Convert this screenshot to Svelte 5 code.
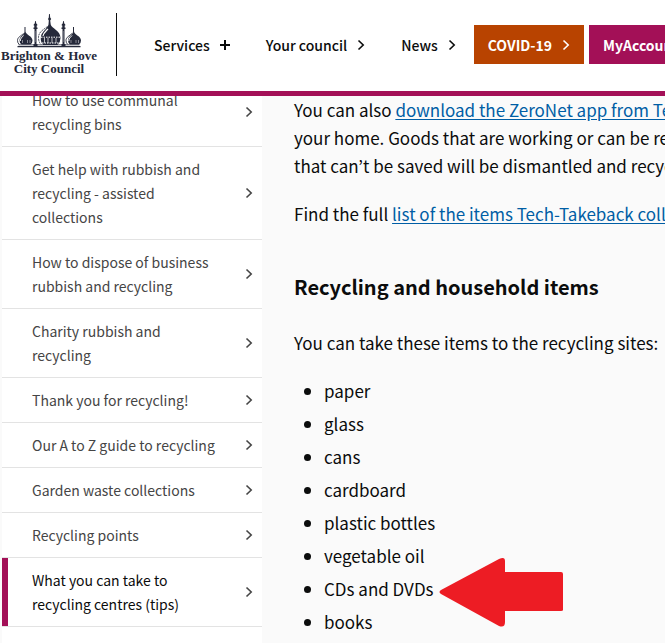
<script>
  const nav = [
    { label: 'Services', icon: 'plus' },
    { label: 'Your council', icon: 'chevron' },
    { label: 'News', icon: 'chevron' }
  ];
  const sections = [
    'How to use communal recycling bins',
    'Get help with rubbish and recycling - assisted collections',
    'How to dispose of business rubbish and recycling',
    'Charity rubbish and recycling',
    'Thank you for recycling!',
    'Our A to Z guide to recycling',
    'Garden waste collections',
    'Recycling points',
    'What you can take to recycling centres (tips)'
  ];
  const current = sections.length - 1;
  const items = ['paper', 'glass', 'cans', 'cardboard', 'plastic bottles', 'vegetable oil', 'CDs and DVDs', 'books'];
</script>

{#snippet chevron()}
  <svg class="chevron" viewBox="0 0 8 12" aria-hidden="true"><path d="M1.500 1.500 6.200 6 1.500 10.500" /></svg>
{/snippet}

{#snippet sideDome()}
  <path d="M7.500 0h1v4.500c.5 3.500 7 4.500 7 9q0 2.500-2 4H4.500q-2-1.500-2-4c0-4.500 5-5.500 5-9z" />
  <path d="M6.500 6.500C4 9 .5 10 .5 13.500q0 2.500 1.800 4" fill="none" stroke="#25293a" stroke-width=".9" />
  <path d="M6.500 8.500C5 10.500 3.300 11 3.300 14" fill="none" stroke="#fff" />
  <path d="M5.500 13v3M10.500 13v3M13 13v3" stroke="#c9cad0" stroke-width=".6" />
{/snippet}

{#snippet minaret()}
  <path d="M1.200 0h.6l.5 2.500 1 1v1H2.700v2h.8v1.500H2.500V23H3.500v2h-4v-2h1V8H-.5V6.500h.8v-2h-.6v-1l1-1z" />
  <path d="M1.500 10v11" stroke="#8b8e98" stroke-width=".5" />
{/snippet}

<div class="page">
  <header>
    <a class="logo" href="#home">
      <svg viewBox="0 -1 64 36" aria-hidden="true">
        <g fill="#25293a">
          <g transform="translate(0 13)">{@render sideDome()}</g>
          <g transform="translate(17 7)">{@render minaret()}</g>
          <path d="M32 0h.8l.4 3.500 1 1.500-1 1.500.5 4c1 4 9.800 6 9.800 13.500q0 4-3 7H26q-3.500-3-3.500-7c0-7 8.500-9 9-13.500l.3-4L31 5l.8-1.500z" />
          <path d="M30 13c-4 3-8 5-8.500 10q0 5 3 8h1.500q-3-4-2-8.500c.5-4 4-6 6-9.500z" fill="#fff" />
          <path d="M30.500 12.500C26 16 21.500 18 21.500 23.500q0 4.500 2.500 7" fill="none" stroke="#25293a" stroke-width=".8" stroke-dasharray="2 .7" />
          <path d="M31 15c-3 3-4.500 4-5 7" fill="none" stroke="#fff" stroke-width="1.200" />
          <path d="M24 23.200h19" stroke="#fff" stroke-width="1" stroke-dasharray="1.500 1" />
          <path d="M25 29h17.500" stroke="#fff" stroke-width="1.200" stroke-dasharray="1.500 1" />
          <path d="M27.500 24v5M31 24v5M35 24v5M39 24v5" stroke="#fff" stroke-width=".7" />
          <g transform="translate(45 7)">{@render minaret()}</g>
          <g transform="translate(48.500 13)">{@render sideDome()}</g>
          <path d="M1.500 30.500h61v.8h-61zM.5 32h63v1.200H.5z" />
        </g>
      </svg>
      <span>Brighton &amp; Hove</span>
      <span>City Council</span>
    </a>
    <nav aria-label="Main">
      {#each nav as entry}
        <a href="#{entry.label}">
          {entry.label}
          {#if entry.icon === 'plus'}
            <svg class="plus" viewBox="0 0 10 10" aria-hidden="true"><path d="M5 0v10M0 5h10" /></svg>
          {:else}
            {@render chevron()}
          {/if}
        </a>
      {/each}
    </nav>
    <div class="actions">
      <a class="covid" href="#covid">COVID-19 {@render chevron()}</a>
      <a class="account" href="#account">MyAccount</a>
    </div>
  </header>

  <div class="body">
    <aside>
      <ul>
        {#each sections as section, i}
          <li class:current={i === current}>
            <a href="#section-{i}" aria-current={i === current ? 'page' : undefined}>
              <span>{section}</span>
              {@render chevron()}
            </a>
          </li>
        {/each}
      </ul>
    </aside>

    <main>
      <p>
        You can also <a href="#app">download the ZeroNet app from Tech</a><br />
        your home. Goods that are working or can be reused<br />
        that can’t be saved will be dismantled and recycled
      </p>
      <p>Find the full <a href="#list">list of the items Tech-Takeback collect</a></p>
      <h2>Recycling and household items</h2>
      <p>You can take these items to the recycling sites:</p>
      <ul>
        {#each items as item}
          <li>
            {item}
            {#if item === 'CDs and DVDs'}
              <svg class="pointer" viewBox="0 0 125 70" aria-hidden="true">
                <path d="M2 33 60 2Q66-1 66 4V15H122Q124 15 124 17V53Q124 54 122 54H66V65Q66 71 60 69L2 37Q-1 35 2 33Z" />
              </svg>
            {/if}
          </li>
        {/each}
      </ul>
    </main>
  </div>
</div>

<style>
  :global(body) {
    margin: 0;
    background: #fafafa;
  }
  .page {
    height: 100vh;
    overflow: hidden;
    color: #0b0c0c;
    font-family: 'Noto Sans CJK JP', 'Noto Sans', sans-serif;
  }
  ul {
    margin: 0;
    padding: 0;
    list-style: none;
  }
  header {
    position: relative;
    z-index: 1;
    display: flex;
    align-items: center;
    height: 89px;
    padding-bottom: 2px;
    overflow: hidden;
    border-bottom: 5px solid #a31057;
    background: #fff;
    white-space: nowrap;
  }
  header a {
    color: inherit;
    text-decoration: none;
  }
  .logo {
    box-sizing: border-box;
    display: flex;
    flex: none;
    flex-direction: column;
    align-items: center;
    width: 117px;
    height: 63px;
    padding-right: 18px;
    border-right: 1px solid #0b0c0c;
    color: #25293a;
    font: bold 13px/13px 'Liberation Serif', serif;
  }
  .logo svg {
    width: 64px;
    height: 36px;
    flex: none;
  }
  nav {
    display: flex;
    gap: 36px;
    margin: 0 18px 0 37px;
    font-size: 14px;
    font-weight: 500;
  }
  nav a,
  .actions a {
    display: flex;
    align-items: center;
    gap: 10px;
  }
  .chevron {
    flex: none;
    width: 8px;
    height: 12px;
    fill: none;
    stroke: currentColor;
    stroke-width: 1.6;
  }
  .plus {
    width: 10px;
    height: 10px;
    stroke: currentColor;
    stroke-width: 2;
  }
  .actions {
    display: flex;
    gap: 5px;
    color: #fff;
    font-size: 14px;
    font-weight: 700;
  }
  .actions a {
    height: 39px;
    padding: 0 14px;
  }
  .covid {
    background: #b84300;
  }
  .account {
    background: #a31057;
  }
  .body {
    display: flex;
    margin-top: -18px;
  }
  aside {
    flex: none;
    width: 260px;
    min-height: 100vh;
    margin-left: 2px;
    background: #fff;
    font-size: 14px;
    line-height: 24px;
  }
  aside li {
    border-bottom: 1px solid #e3e3e3;
  }
  aside a {
    display: flex;
    align-items: center;
    justify-content: space-between;
    padding: 10px 9px 10px 30px;
    color: #454545;
    text-decoration: none;
  }
  aside span {
    max-width: 190px;
  }
  .current a {
    padding-left: 24px;
    border-left: 6px solid #a31057;
    color: #0b0c0c;
  }
  .current .chevron,
  aside .chevron {
    color: #454545;
  }
  main {
    flex: 1;
    min-width: 0;
    padding: 18px 0 0 32px;
    font-size: 17px;
    line-height: 28px;
    white-space: nowrap;
  }
  main p {
    margin: 0 0 20px;
  }
  main p a {
    color: #005ea5;
    text-underline-offset: 2px;
  }
  h2 {
    margin: 45px 0 28px;
    font-size: 20px;
    line-height: 28px;
  }
  main ul {
    padding-left: 30px;
    list-style: disc;
  }
  main li {
    position: relative;
    margin-bottom: 5px;
  }
  .pointer {
    position: absolute;
    top: -18px;
    left: 115px;
    width: 125px;
    height: 70px;
    fill: #ed1c24;
  }
</style>
